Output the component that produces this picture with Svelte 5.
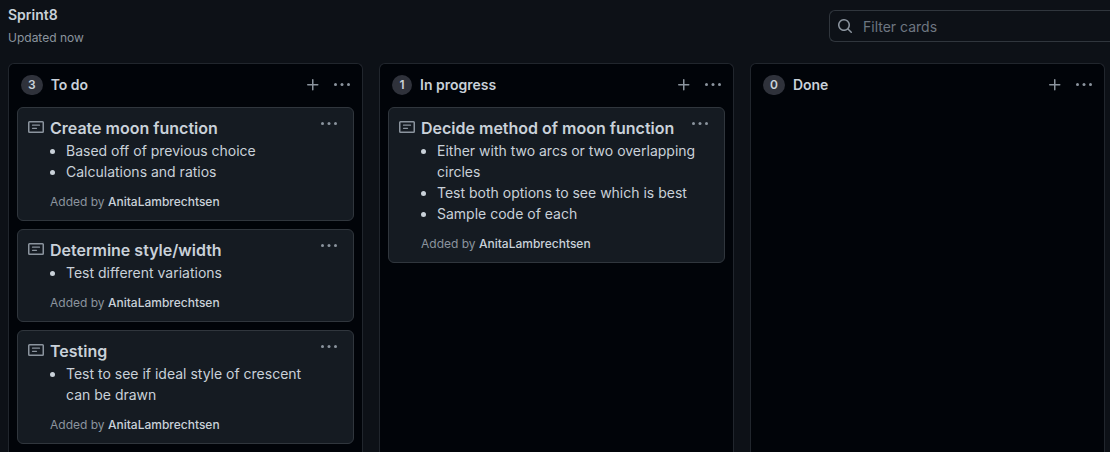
<script>
  const columns = [
    {
      name: 'To do',
      cards: [
        { title: 'Create moon function', items: ['Based off of previous choice', 'Calculations and ratios'] },
        { title: 'Determine style/width', items: ['Test different variations'] },
        { title: 'Testing', items: ['Test to see if ideal style of crescent can be drawn'] }
      ]
    },
    {
      name: 'In progress',
      cards: [
        {
          title: 'Decide method of moon function',
          items: [
            'Either with two arcs or two overlapping circles',
            'Test both options to see which is best',
            'Sample code of each'
          ]
        }
      ]
    },
    { name: 'Done', cards: [] }
  ];
</script>

{#snippet dots()}
  <svg viewBox="0 0 16 16" aria-hidden="true">
    <circle cx="1.5" cy="7.5" r="1.5" /><circle cx="8" cy="7.5" r="1.5" /><circle cx="14.5" cy="7.5" r="1.5" />
  </svg>
{/snippet}

<main>
  <header>
    <div>
      <h1>Sprint8</h1>
      <p class="updated">Updated now</p>
    </div>
    <label class="search">
      <svg viewBox="0 0 16 16" aria-hidden="true">
        <path fill-rule="evenodd" d="M11.5 7a4.499 4.499 0 11-8.998 0A4.499 4.499 0 0111.5 7zm-.82 4.74a6 6 0 111.06-1.06l3.04 3.04a.75.75 0 11-1.06 1.06l-3.04-3.04z" />
      </svg>
      <input type="text" placeholder="Filter cards" aria-label="Filter cards" />
    </label>
  </header>

  <div class="board">
    {#each columns as column}
      <section>
        <div class="head">
          <span class="count">{column.cards.length}</span>
          <h2>{column.name}</h2>
          <button aria-label="Add a note">
            <svg viewBox="0 0 16 16" aria-hidden="true">
              <path d="M7.75 2a.75.75 0 01.75.75V7h4.25a.75.75 0 110 1.5H8.5v4.25a.75.75 0 11-1.5 0V8.5H2.75a.75.75 0 010-1.5H7V2.75A.75.75 0 017.75 2z" />
            </svg>
          </button>
          <button aria-label="Column menu">{@render dots()}</button>
        </div>
        <div class="cards">
          {#each column.cards as card}
            <article>
              <svg class="note" viewBox="0 0 16 16" aria-hidden="true">
                <path fill-rule="evenodd" d="M1.5 2h13A1.5 1.5 0 0116 3.5v9a1.5 1.5 0 01-1.5 1.5h-13A1.5 1.5 0 010 12.5v-9A1.5 1.5 0 011.5 2zm0 1.4v9.2h13V3.4zM4.5 5.5h7a.6.6 0 010 1.3h-7a.6.6 0 010-1.3zm0 3.2h4a.6.6 0 010 1.3h-4a.6.6 0 010-1.3z" />
              </svg>
              <div class="body">
                <h3>{card.title}</h3>
                <ul>
                  {#each card.items as item}<li>{item}</li>{/each}
                </ul>
                <p class="by">Added by <a href="#author">AnitaLambrechtsen</a></p>
              </div>
              <button aria-label="Card menu">{@render dots()}</button>
            </article>
          {/each}
        </div>
      </section>
    {/each}
  </div>
</main>

<style>
  :global(body) {
    margin: 0;
    background: #0d1117;
  }
  main {
    box-sizing: border-box;
    height: 100vh;
    display: flex;
    flex-direction: column;
    overflow: hidden;
    font: 14px/21px Inter, sans-serif;
    color: #c9d1d9;
  }
  h1, h2, h3, p, ul {
    margin: 0;
    padding: 0;
  }
  svg {
    display: block;
    width: 16px;
    height: 16px;
    flex: none;
    fill: #8b949e;
  }
  button {
    padding: 0;
    border: 0;
    background: none;
    cursor: pointer;
  }
  header {
    display: flex;
    justify-content: space-between;
    padding: 4px 0 5px 8px;
    margin-bottom: 10px;
    flex: none;
  }
  h1, h2 {
    font-size: 14px;
    line-height: 21px;
    font-weight: 600;
  }
  .updated {
    margin-top: 2px;
    font-size: 12px;
  }
  .updated, .by {
    color: #8b949e;
  }
  .search {
    box-sizing: border-box;
    display: flex;
    align-items: center;
    gap: 10px;
    width: 281px;
    height: 32px;
    margin-top: 6px;
    padding-left: 7px;
    border: 1px solid #30363d;
    border-right: 0;
    border-radius: 6px 0 0 6px;
  }
  input {
    flex: 1;
    min-width: 0;
    padding: 0;
    border: 0;
    outline: 0;
    background: none;
    font: inherit;
    color: inherit;
  }
  input::placeholder {
    color: #6e7681;
    opacity: 1;
  }
  .board {
    flex: 1;
    min-height: 0;
    display: grid;
    grid-template-columns: repeat(3, minmax(0, 1fr));
    gap: 16px;
    padding: 0 5px 0 8px;
  }
  section {
    border: 1px solid #21262d;
    border-bottom: 0;
    border-radius: 6px 6px 0 0;
    background: #010409;
  }
  .head {
    display: flex;
    align-items: center;
    height: 43px;
    box-sizing: border-box;
    padding: 0 12px 2px;
  }
  .head h2 {
    flex: 1;
    margin-left: 8px;
  }
  .head button + button {
    margin-left: 13px;
  }
  .count {
    box-sizing: border-box;
    min-width: 20px;
    padding: 0 7px;
    border-radius: 10px;
    background: #2f323b;
    font-size: 12px;
    line-height: 20px;
    font-weight: 600;
    text-align: center;
  }
  .cards {
    display: flex;
    flex-direction: column;
    gap: 8px;
    padding: 0 8px;
  }
  article {
    display: flex;
    align-items: flex-start;
    padding: 8px 16px 9px 10px;
    border: 1px solid #30363d;
    border-radius: 6px;
    background: #151b22;
  }
  .note {
    margin: 3px 6px 0 0;
  }
  .body {
    flex: 1;
    min-width: 0;
  }
  h3 {
    font-size: 16px;
    line-height: 24px;
    font-weight: 600;
  }
  ul {
    padding-left: 16px;
    margin-right: -5px;
  }
  .by {
    margin-top: 11px;
    font-size: 12px;
    line-height: 18px;
  }
  a {
    color: #c9d1d9;
    font-weight: 500;
    text-decoration: none;
  }
</style>
